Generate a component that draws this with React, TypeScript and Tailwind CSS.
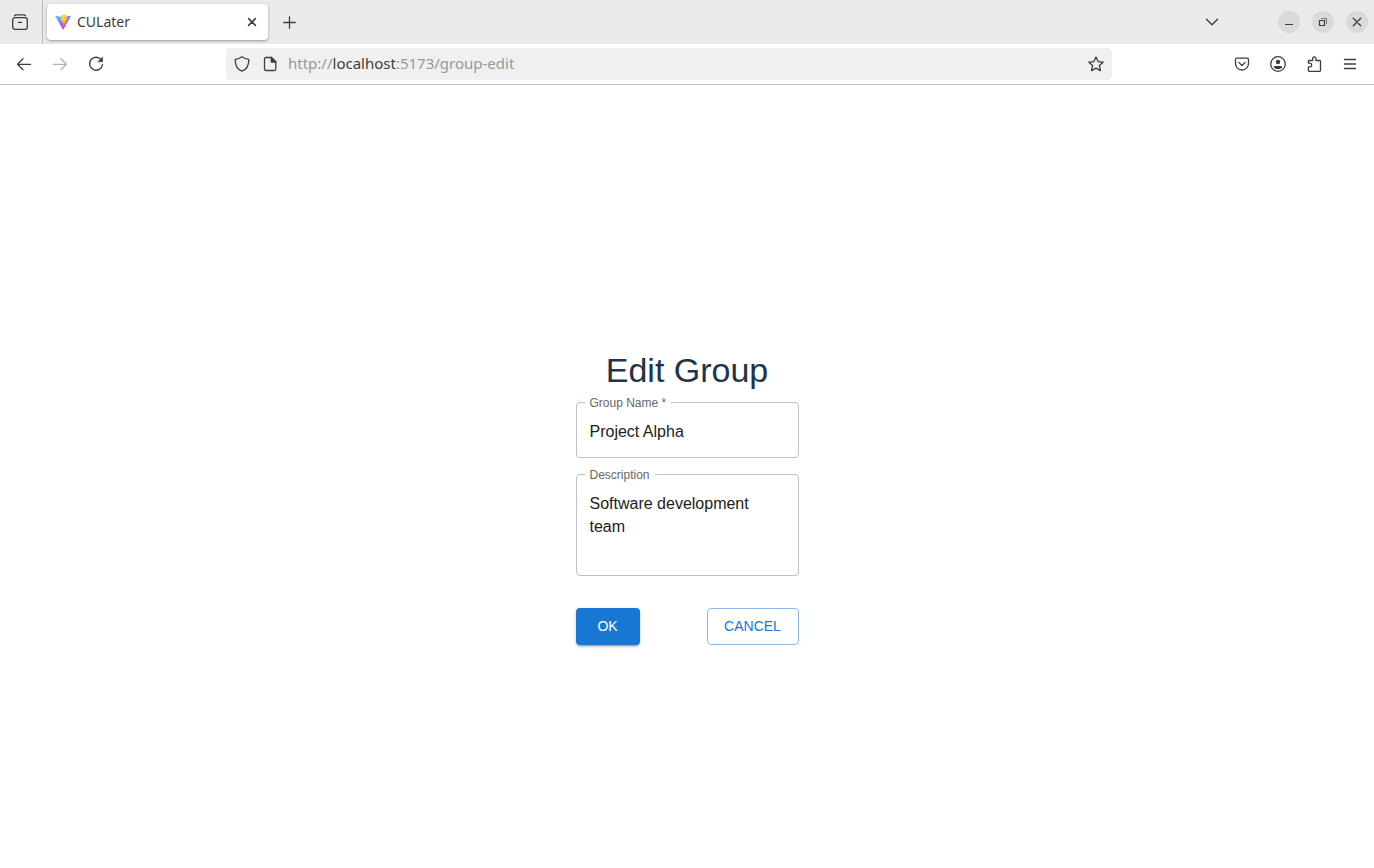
import { useState, type ReactNode } from "react";

function Icon({ children, className = "" }: { children: ReactNode; className?: string }) {
  return (
    <svg
      viewBox="0 0 16 16"
      className={`size-4 shrink-0 ${className}`}
      fill="none"
      stroke="currentColor"
      strokeWidth="1.3"
      strokeLinecap="round"
      strokeLinejoin="round"
      aria-hidden="true"
    >
      {children}
    </svg>
  );
}

function ToolButton({ label, children, disabled }: { label: string; children: ReactNode; disabled?: boolean }) {
  return (
    <button
      type="button"
      aria-label={label}
      disabled={disabled}
      className="flex h-8 w-9 items-center justify-center rounded disabled:text-[#b0b0b0]"
    >
      {children}
    </button>
  );
}

function WindowButton({ label, children }: { label: string; children: ReactNode }) {
  return (
    <button
      type="button"
      aria-label={label}
      className="flex size-[22px] items-center justify-center rounded-full bg-[#dadada]"
    >
      {children}
    </button>
  );
}

function ViteLogo() {
  return (
    <svg viewBox="0 0 410 404" className="size-4 shrink-0" aria-hidden="true">
      <defs>
        <linearGradient id="vite-body" x1="6" y1="33" x2="235" y2="344" gradientUnits="userSpaceOnUse">
          <stop stopColor="#41D1FF" />
          <stop offset="1" stopColor="#BD34FE" />
        </linearGradient>
        <linearGradient id="vite-bolt" x1="194.651" y1="8.818" x2="236.076" y2="292.989" gradientUnits="userSpaceOnUse">
          <stop stopColor="#FFEA83" />
          <stop offset="0.083" stopColor="#FFDD35" />
          <stop offset="1" stopColor="#FFA800" />
        </linearGradient>
      </defs>
      <path
        fill="url(#vite-body)"
        d="M399.641 59.5246L215.643 388.545C211.844 395.338 202.084 395.378 198.228 388.618L10.5817 59.5563C6.38087 52.1896 12.6802 43.2665 21.0281 44.7586L205.223 77.6824C206.398 77.8924 207.601 77.8904 208.776 77.6763L389.119 44.8058C397.439 43.2894 403.768 52.1434 399.641 59.5246Z"
      />
      <path
        fill="url(#vite-bolt)"
        d="M292.965 1.5744L156.801 28.2552C154.563 28.6937 152.906 30.5903 152.771 32.8664L144.395 174.33C144.198 177.662 147.258 180.248 150.51 179.498L188.42 170.749C191.967 169.931 195.172 173.055 194.443 176.622L183.18 231.775C182.422 235.487 185.907 238.661 189.532 237.56L212.947 230.446C216.577 229.344 220.065 232.527 219.297 236.242L201.398 322.875C200.278 328.294 207.486 331.249 210.492 326.603L212.5 323.5L323.454 102.072C325.312 98.3645 322.108 94.137 318.036 94.9228L279.014 102.454C275.347 103.161 272.227 99.746 273.262 96.1583L298.731 7.86689C299.767 4.27314 296.636 0.855181 292.965 1.5744Z"
      />
    </svg>
  );
}

function TabStrip() {
  return (
    <div className="flex h-11 items-stretch bg-[#eaeaea]">
      <button
        type="button"
        aria-label="Recent browsing"
        className="flex w-[43px] items-center justify-center border-r border-[#b8b8b8] pr-0.5"
      >
        <Icon>
          <path d="M2.600 1.800c.3-.7.8-1 1.600-1h7.600c.8 0 1.300.3 1.600 1" />
          <rect x="0.7" y="3.7" width="14.6" height="11.600" rx="2.2" />
          <path d="M6.400 8.300h3.200" />
        </Icon>
      </button>
      <div className="my-1 ml-1 flex w-[221px] items-center gap-1.5 rounded bg-white pr-2 pl-2 shadow-[0_1px_3px_rgba(0,0,0,0.35)]">
        <ViteLogo />
        <span className="flex-1 text-sm">CULater</span>
        <button type="button" aria-label="Close tab" className="flex size-4 items-center justify-center">
          <Icon>
            <path d="M4.600 4.600l6.800 6.800M11.400 4.600l-6.800 6.800" strokeWidth="1.5" />
          </Icon>
        </button>
      </div>
      <button type="button" aria-label="New tab" className="flex w-11 items-center justify-center">
        <Icon>
          <path d="M7.500 2.800v11.400M1.800 8.500h11.400" />
        </Icon>
      </button>
      <div className="ml-auto flex items-center pr-1.5">
        <button type="button" aria-label="List all tabs" className="mr-[58px] flex size-4 items-center justify-center">
          <Icon>
            <path d="M2.400 5.200L8 10.800l5.600-5.600" />
          </Icon>
        </button>
        <div className="flex gap-3">
          <WindowButton label="Minimize">
            <Icon>
              <path d="M4 10.500h8" strokeLinecap="butt" strokeWidth="1" />
            </Icon>
          </WindowButton>
          <WindowButton label="Restore">
            <Icon>
              <path d="M4.500 6.500h5v5h-5z" strokeWidth="1.2" strokeLinejoin="miter" />
              <path d="M6 4.500h5.500V10" strokeWidth="1" strokeLinecap="butt" strokeLinejoin="miter" opacity="0.65" />
            </Icon>
          </WindowButton>
          <WindowButton label="Close window">
            <Icon>
              <path d="M4.300 4.300l7.400 7.400M11.700 4.300l-7.400 7.400" />
            </Icon>
          </WindowButton>
        </div>
      </div>
    </div>
  );
}

function AddressBar() {
  const [url, setUrl] = useState("http://localhost:5173/group-edit");
  const parts = url.match(/^(\w+:\/\/)?([^:/]*)(.*)$/);
  return (
    <div className="mx-28 flex h-8 flex-1 items-center rounded bg-[#f0f0f0] px-2">
      <Icon>
        <path d="M8 .8c2 1.500 4.200 2.300 6.700 2.500C15 8.800 12.500 13.300 8 15.200 3.500 13.300 1 8.800 1.300 3.300 3.800 3.100 6 2.300 8 .8z" />
      </Icon>
      <Icon className="ml-3">
        <path d="M4 1.500h5.500l4.300 4.300v7.200c0 .9-.6 1.500-1.500 1.500H4c-.9 0-1.500-.6-1.500-1.500V3c0-.9.600-1.500 1.500-1.500z" />
        <path d="M9.300 1.500v4.500h4.500z" fill="currentColor" />
      </Icon>
      <div className="relative ml-2.5 flex flex-1 items-center pb-0.5 text-[15px] leading-6">
        <input
          aria-label="Address"
          value={url}
          onChange={(e) => setUrl(e.target.value)}
          className="w-full bg-transparent text-transparent caret-[#3d3d3d] outline-none"
        />
        <div aria-hidden="true" className="pointer-events-none absolute inset-0 whitespace-pre text-[#989898]">
          {parts?.[1]}
          <span className="text-[#3d3d3d]">{parts?.[2]}</span>
          {parts?.[3]}
        </div>
      </div>
      <button type="button" aria-label="Bookmark this page" className="flex size-4 items-center justify-center">
        <Icon>
          <path d="M8 1l2.100 4.600 5 .6-3.700 3.400 1 5L8 12.100l-4.400 2.500 1-5L.9 6.200l5-.6z" />
        </Icon>
      </button>
    </div>
  );
}

function Toolbar() {
  return (
    <div className="flex items-center border-b border-[#c4c4c4] bg-white px-1.5 py-1">
      <ToolButton label="Back">
        <Icon>
          <path d="M14.500 8.300H1.500M7 2.800L1.500 8.300 7 13.800" />
        </Icon>
      </ToolButton>
      <ToolButton label="Forward" disabled>
        <Icon>
          <path d="M1.500 8.300h13M9 2.800l5.500 5.500L9 13.800" />
        </Icon>
      </ToolButton>
      <ToolButton label="Reload">
        <Icon>
          <path d="M13.500 4.200A6.500 6.500 0 1 0 14.500 8.500" />
          <path d="M14.600 1.300v4.500h-4.500z" fill="currentColor" strokeWidth="0.6" />
        </Icon>
      </ToolButton>
      <AddressBar />
      <ToolButton label="Save to Pocket">
        <Icon>
          <path d="M3 2.200h10c.9 0 1.500.6 1.500 1.500V7.500a6.500 6.500 0 0 1-13 0V3.700c0-.9.600-1.500 1.500-1.500z" />
          <path d="M4.800 6.400L8 9.500l3.200-3.100" />
        </Icon>
      </ToolButton>
      <ToolButton label="Account">
        <Icon>
          <circle cx="8" cy="8" r="7.300" />
          <circle cx="8" cy="6" r="2.200" fill="currentColor" stroke="none" />
          <path
            d="M5.200 9.900h5.600c.9 0 1.500.6 1.500 1.400-1 1.200-2.500 1.900-4.300 1.900s-3.300-.7-4.300-1.900c0-.8.6-1.400 1.500-1.400z"
            fill="currentColor"
            stroke="none"
          />
        </Icon>
      </ToolButton>
      <ToolButton label="Extensions">
        <Icon>
          <path d="M2.400 7.200V5.300c0-.5.300-.8.800-.8h3.500V2.500a1.600 1.600 0 0 1 3.200 0v2h3.800c.5 0 .8.300.8.800v9.200c0 .5-.3.800-.8.800H3.200c-.5 0-.8-.3-.8-.8v-3.600h1.400a1.800 1.800 0 0 0 0-3.700z" />
        </Icon>
      </ToolButton>
      <ToolButton label="Open application menu">
        <Icon>
          <path d="M2.500 3.500h11M2.500 8h11M2.500 12.500h11" />
        </Icon>
      </ToolButton>
    </div>
  );
}

function Field({ id, label, children }: { id: string; label: string; children: ReactNode }) {
  return (
    <fieldset className="flex min-w-0 rounded border border-[#c0c0c0] px-2">
      <legend className="px-[5px] pt-0.5 text-xs leading-4 text-[#666666]">
        <label htmlFor={id}>{label}</label>
      </legend>
      {children}
    </fieldset>
  );
}

function EditGroup() {
  const [name, setName] = useState("Project Alpha");
  const [description, setDescription] = useState("Software development\nteam");
  return (
    <form
      onSubmit={(e) => e.preventDefault()}
      className="flex w-[223px] flex-col font-['Liberation_Sans',Arial,sans-serif] text-base"
    >
      <h1 className="mb-[3px] text-center text-[34px] leading-10 text-[#213547]">Edit Group</h1>
      <div className="flex flex-col gap-[7px]">
        <Field id="group-name" label="Group Name *">
          <input
            id="group-name"
            required
            value={name}
            onChange={(e) => setName(e.target.value)}
            className="w-full px-[5px] pt-[9px] pb-[13px] leading-6 text-[#212121] outline-none"
          />
        </Field>
        <Field id="description" label="Description">
          <textarea
            id="description"
            rows={3}
            value={description}
            onChange={(e) => setDescription(e.target.value)}
            className="mt-[9px] mb-[14px] w-full resize-none overflow-hidden px-[5px] leading-[23px] text-[#212121] outline-none"
          />
        </Field>
      </div>
      <div className="mt-8 flex justify-between text-sm leading-[25px]">
        <button
          type="submit"
          className="min-w-16 rounded bg-[#1976d2] px-4 py-1.5 text-white shadow-[0_3px_1px_-2px_rgba(0,0,0,0.2),0_2px_2px_rgba(0,0,0,0.14),0_1px_5px_rgba(0,0,0,0.12)]"
        >
          OK
        </button>
        <button type="button" className="w-[92px] rounded border border-[#8cbae8] py-[5px] text-[#1976d2]">
          CANCEL
        </button>
      </div>
    </form>
  );
}

export default function App() {
  return (
    <div className="flex min-h-screen flex-col bg-white font-['Noto_Sans',sans-serif] text-[#3d3d3d]">
      <header>
        <TabStrip />
        <Toolbar />
      </header>
      <main className="flex flex-1 items-center justify-center pt-[42px]">
        <EditGroup />
      </main>
    </div>
  );
}
